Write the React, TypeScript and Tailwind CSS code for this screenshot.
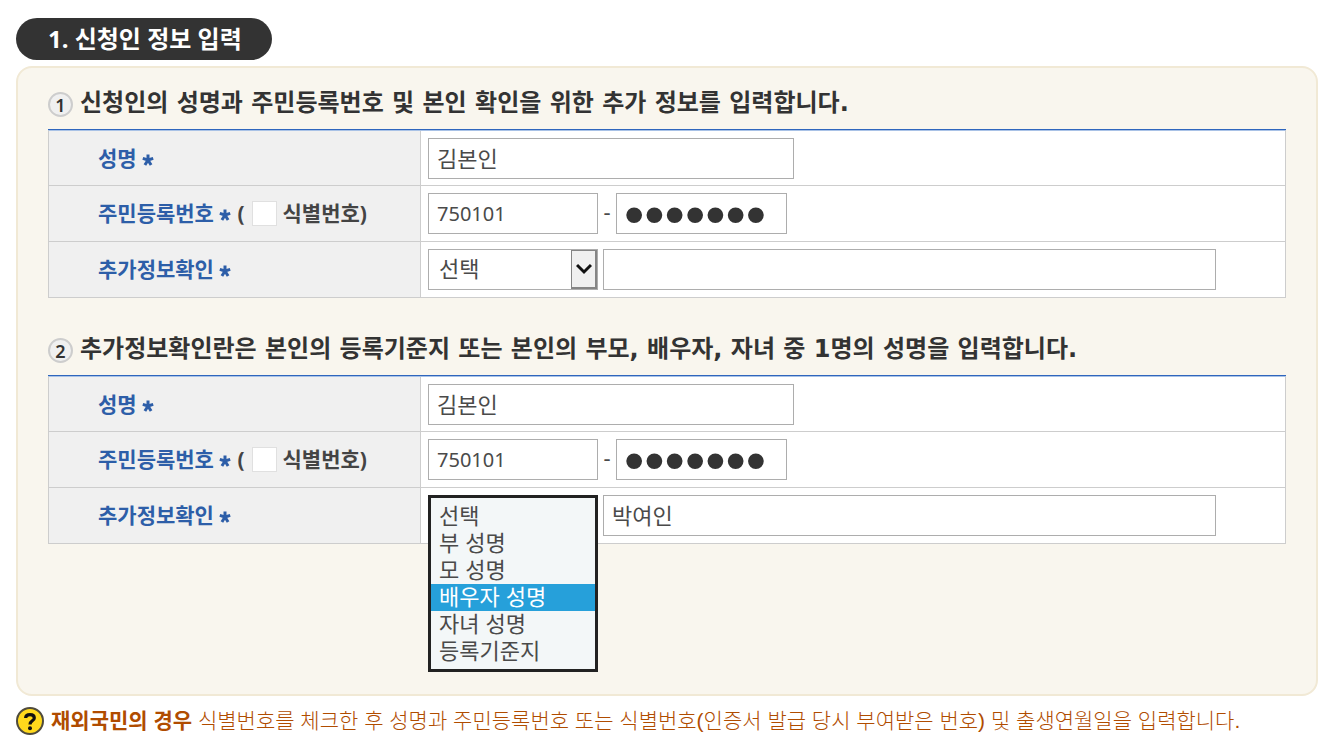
import React, { useState } from "react";
import clsx from "clsx";

const RELATIONS = ["선택", "부 성명", "모 성명", "배우자 성명", "자녀 성명", "등록기준지"];

const fieldClass =
  "h-[41px] rounded-none border border-[#adadad] bg-white px-2 text-[#4a4a4a] outline-none";

export default function App() {
  return (
    <main className="pt-[18px] pr-[15px] pb-3 pl-4 font-['Noto_Sans','Noto_Sans_CJK_KR',sans-serif] text-[#333]">
      <h1 className="flex h-[42px] w-fit items-center rounded-full bg-[#333] pr-[30px] pl-8 text-[24px] leading-8 font-bold text-white">
        1. 신청인 정보 입력
      </h1>

      <div className="mt-1.5 rounded-2xl border-2 border-[#f1e9d5] bg-[#f9f6ee] px-[30px] pt-4 pb-[150px]">
        <Step number={1} title="신청인의 성명과 주민등록번호 및 본인 확인을 위한 추가 정보를 입력합니다.">
          <ApplicantTable id="first" />
        </Step>
        <div className="h-8" />
        <Step number={2} title="추가정보확인란은 본인의 등록기준지 또는 본인의 부모, 배우자, 자녀 중 1명의 성명을 입력합니다.">
          <ApplicantTable id="second" extra="박여인" relation="배우자 성명" defaultOpen />
        </Step>
      </div>

      <p className="mt-[9px] flex items-center font-['Liberation_Sans','Noto_Sans_CJK_KR',sans-serif] text-[21px] leading-8 text-[#b04c00]">
        <QuestionIcon />
        <span className="ml-[7px]">
          <strong className="font-bold">재외국민의 경우</strong>{" "}
          <span className="font-light">
            식별번호를 체크한 후 성명과 주민등록번호 또는 식별번호(인증서 발급 당시 부여받은 번호) 및 출생연월일을 입력합니다.
          </span>
        </span>
      </p>
    </main>
  );
}

function Step({ number, title, children }: { number: number; title: string; children: React.ReactNode }) {
  return (
    <section>
      <h2 className="flex h-[45px] items-center gap-[7px] pb-2 font-['DejaVu_Sans','Noto_Sans_CJK_KR',sans-serif] text-[24px] leading-9 font-bold">
        <span className="mt-1 flex size-[25px] shrink-0 items-center justify-center rounded-full border-2 border-[#cdcdcd] bg-[#f0f0f0] font-['Noto_Sans',sans-serif] text-[18px] leading-5 font-semibold">
          {number}
        </span>
        {title}
      </h2>
      {children}
    </section>
  );
}

type ApplicantTableProps = {
  id: string;
  extra?: string;
  relation?: string;
  defaultOpen?: boolean;
};

function ApplicantTable({ id, extra = "", relation = "선택", defaultOpen = false }: ApplicantTableProps) {
  return (
    <div className="border-t border-[#2f66bd]">
      <table className="w-full table-fixed border-separate border-spacing-0 border-x border-t border-x-[#cdcdcd] border-t-[#a9c2e6] bg-white">
        <colgroup>
          <col className="w-[372px]" />
          <col />
        </colgroup>
        <tbody>
          <Row label={<label htmlFor={`${id}-name`}>성명 <Required /></label>}>
            <input id={`${id}-name`} type="text" defaultValue="김본인" className={clsx(fieldClass, "w-[366px] pb-[3px] text-[22px]")} />
          </Row>
          <Row
            label={
              <>
                <label htmlFor={`${id}-front`}>주민등록번호 <Required /></label>
                <label className="ml-1.5 flex items-center text-[#444]">
                  (
                  <input
                    type="checkbox"
                    className="mr-1.5 ml-[7px] size-[25px] appearance-none border border-[#e0e0e0] bg-white checked:bg-[#26a0da]"
                  />
                  식별번호)
                </label>
              </>
            }
          >
            <input id={`${id}-front`} type="text" defaultValue="750101" className={clsx(fieldClass, "w-[170px] text-[20px]")} />
            <span className="w-[18px] pb-1.5 text-center text-[22px] leading-8 text-[#4a4a4a]">-</span>
            <input
              type="password"
              aria-label="주민등록번호 뒷자리"
              defaultValue="1234567"
              className="h-[41px] w-[171px] border border-[#adadad] bg-white px-[7px] font-['Liberation_Sans',sans-serif] text-[58px] text-[#333] outline-none"
            />
          </Row>
          <Row label={<label htmlFor={`${id}-relation`}>추가정보확인 <Required /></label>}>
            <RelationSelect id={`${id}-relation`} initial={relation} defaultOpen={defaultOpen} />
            <input
              type="text"
              aria-label="추가정보"
              defaultValue={extra}
              className={clsx(fieldClass, "mr-[62px] ml-[5px] min-w-0 flex-1 pb-[3px] text-[22px]")}
            />
          </Row>
        </tbody>
      </table>
    </div>
  );
}

function Row({ label, children }: { label: React.ReactNode; children: React.ReactNode }) {
  return (
    <tr className="h-14 first:h-[55px]">
      <th scope="row" className="border-r border-b border-[#cdcdcd] bg-[#f0f0f0] p-0 text-left text-[21px] leading-8 font-bold">
        <div className="flex items-center pb-px pl-[49px] text-[#2d5ea8]">{label}</div>
      </th>
      <td className="border-b border-[#cdcdcd] p-0">
        <div className="flex items-center px-[7px]">{children}</div>
      </td>
    </tr>
  );
}

function Required() {
  return (
    <svg viewBox="0 0 12 12" className="inline size-3 stroke-[#2d5ea8]" strokeWidth="3" aria-label="필수">
      <path d="M6 6V0.5M6 6L0.8 4.4M6 6L11.2 4.4M6 6L2.9 11M6 6L9.1 11" />
    </svg>
  );
}

function RelationSelect({ id, initial, defaultOpen }: { id: string; initial: string; defaultOpen: boolean }) {
  const [value, setValue] = useState(initial);
  const [open, setOpen] = useState(defaultOpen);

  return (
    <div className="relative w-[170px] shrink-0">
      <select
        id={id}
        value={value}
        onChange={(e) => setValue(e.target.value)}
        className={clsx(fieldClass, "block w-full appearance-none pb-0.5 pl-[10px] text-[22px]", open && "invisible")}
      >
        {RELATIONS.map((name) => (
          <option key={name}>{name}</option>
        ))}
      </select>
      {!open && (
        <span className="pointer-events-none absolute inset-y-px right-px flex w-[26px] items-center justify-center border border-r-2 border-b-2 border-[#858585] bg-[#f0f0f0]">
          <svg viewBox="0 0 16 12" className="h-3 w-4" fill="none" stroke="#111" strokeWidth="3">
            <path d="M1 2L8 9L15 2" />
          </svg>
        </span>
      )}

      {open && (
        <ul
          role="listbox"
          aria-label="추가정보확인"
          className="absolute top-0 left-0 z-10 w-full border-[3px] border-[#222] bg-[#f3f7f8] pt-[5px] pb-1 font-['Liberation_Sans','Noto_Sans_CJK_KR',sans-serif] text-[22px] text-[#4a4a4a]"
        >
          {RELATIONS.map((name) => (
            <li key={name} role="option" aria-selected={name === value}>
              <button
                type="button"
                onClick={() => {
                  setValue(name);
                  setOpen(false);
                }}
                className={clsx(
                  "flex h-[27px] w-full items-center px-2 leading-[27px]",
                  name === value && "bg-[#26a0da] text-white"
                )}
              >
                {name}
              </button>
            </li>
          ))}
        </ul>
      )}
    </div>
  );
}

function QuestionIcon() {
  return (
    <svg viewBox="0 0 28 28" className="size-7 shrink-0" aria-hidden="true">
      <circle cx="14" cy="14" r="13" fill="#ffd91c" stroke="#4f4b3c" strokeWidth="2" />
      <path d="M9.6 11C9.7 8.6 11.4 7.6 14 7.6C16.8 7.6 18.3 9 18.3 10.9C18.3 14 14 13.7 14 17.4" fill="none" stroke="#111" strokeWidth="3.2" />
      <circle cx="14" cy="21.3" r="2" fill="#111" />
    </svg>
  );
}
